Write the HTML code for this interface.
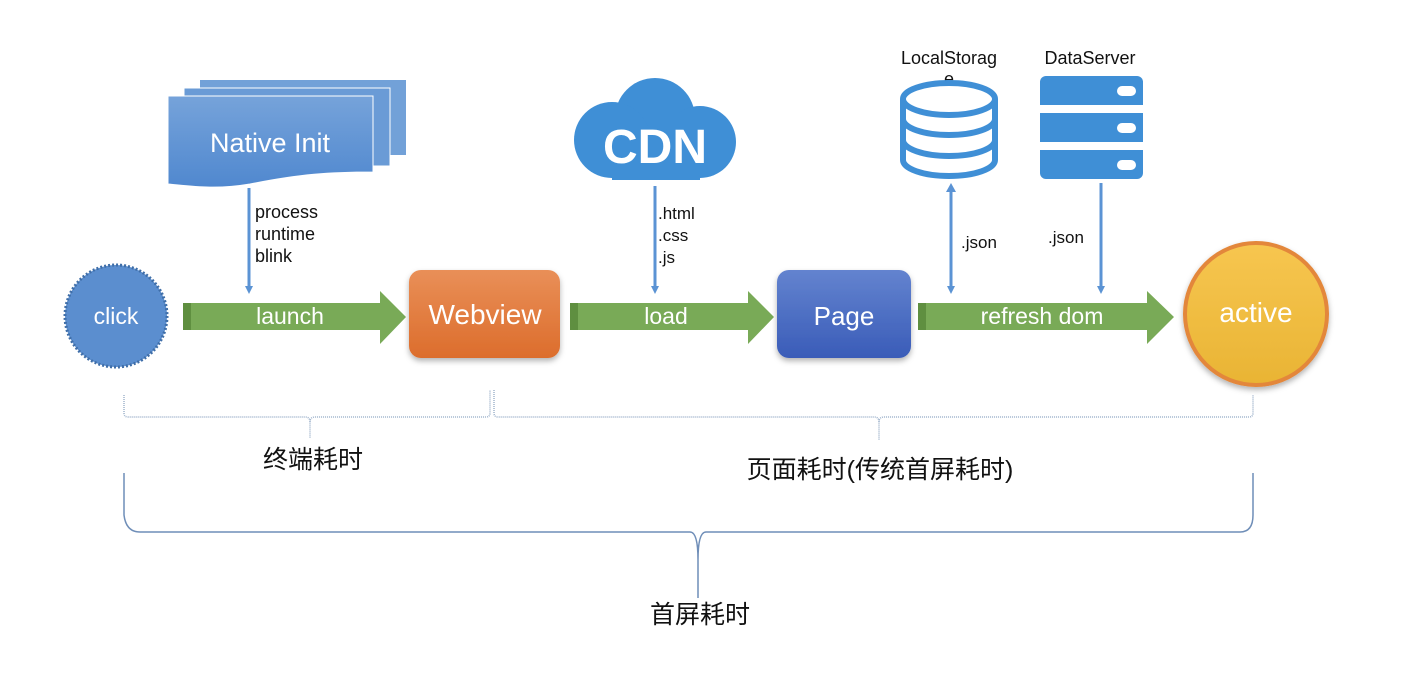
<!DOCTYPE html>
<html><head><meta charset="utf-8"><style>
html,body{margin:0;padding:0;background:#fff;}
svg{display:block}
text{font-family:"Liberation Sans","Noto Sans CJK SC",sans-serif;}
</style></head><body>
<svg width="1414" height="680" viewBox="0 0 1414 680" xmlns="http://www.w3.org/2000/svg">
<defs>
<linearGradient id="nb" x1="0" y1="0" x2="0" y2="1"><stop offset="0" stop-color="#76a3da"/><stop offset="1" stop-color="#5088cf"/></linearGradient>
<linearGradient id="ob" x1="0" y1="0" x2="0" y2="1"><stop offset="0" stop-color="#e98f58"/><stop offset="1" stop-color="#dc6d2c"/></linearGradient>
<linearGradient id="pb" x1="0" y1="0" x2="0" y2="1"><stop offset="0" stop-color="#6383cf"/><stop offset="1" stop-color="#3a5cb8"/></linearGradient>
<linearGradient id="yb" x1="0" y1="0" x2="0" y2="1"><stop offset="0" stop-color="#f7c650"/><stop offset="1" stop-color="#e9b434"/></linearGradient>
<filter id="sh" x="-20%" y="-20%" width="140%" height="150%"><feDropShadow dx="0" dy="3" stdDeviation="3" flood-color="#000" flood-opacity="0.3"/></filter>
<marker id="ah" markerWidth="8" markerHeight="8" refX="4" refY="4" orient="auto" markerUnits="userSpaceOnUse"><path d="M0,0 L8,4 L0,8z" fill="#5b93d4"/></marker>
</defs>

<!-- Native Init -->
<rect x="200" y="80" width="206" height="75" fill="#72a1d8"/>
<rect x="184" y="88" width="206" height="78" fill="#6a9bd6" stroke="#fff" stroke-width="1"/>
<path d="M168,96 H373 V172 C330,172 300,174 250,184 C215,190 190,186 168,184 Z" fill="url(#nb)" stroke="#fff" stroke-width="1"/>
<text x="270" y="152" font-size="27" fill="#fff" text-anchor="middle">Native Init</text>
<line x1="249" y1="188" x2="249" y2="290" stroke="#5b93d4" stroke-width="3" marker-end="url(#ah)"/>
<text font-size="18" fill="#111"><tspan x="255" y="218">process</tspan><tspan x="255" y="240">runtime</tspan><tspan x="255" y="262">blink</tspan></text>

<!-- click -->
<circle cx="116" cy="316" r="51" fill="#5b8ecf" stroke="#3f6ea8" stroke-width="3" stroke-dasharray="2 2"/>
<text x="116" y="324" font-size="23" fill="#fff" text-anchor="middle">click</text>

<!-- arrows -->
<path d="M183,303 H380 V291 L406,317 L380,344 V330 H183 Z" fill="#79aa57"/>
<rect x="183" y="303" width="8" height="27" fill="#5f8f40"/>
<text x="290" y="324" font-size="23" fill="#fff" text-anchor="middle">launch</text>

<path d="M570,303 H748 V291 L774,317 L748,344 V330 H570 Z" fill="#79aa57"/>
<rect x="570" y="303" width="8" height="27" fill="#5f8f40"/>
<text x="666" y="324" font-size="23" fill="#fff" text-anchor="middle">load</text>

<path d="M918,303 H1147 V291 L1174,317 L1147,344 V330 H918 Z" fill="#79aa57"/>
<rect x="918" y="303" width="8" height="27" fill="#5f8f40"/>
<text x="1042" y="324" font-size="23" fill="#fff" text-anchor="middle">refresh dom</text>

<!-- Webview -->
<rect x="409" y="270" width="151" height="88" rx="12" fill="url(#ob)" filter="url(#sh)"/>
<text x="485" y="324" font-size="28" fill="#fff" text-anchor="middle">Webview</text>

<!-- Page -->
<rect x="777" y="270" width="134" height="88" rx="12" fill="url(#pb)" filter="url(#sh)"/>
<text x="844" y="325" font-size="26" fill="#fff" text-anchor="middle">Page</text>

<!-- active -->
<circle cx="1256" cy="314" r="71" fill="url(#yb)" stroke="#e3873a" stroke-width="4" filter="url(#sh)"/>
<text x="1256" y="322" font-size="28" fill="#fff" text-anchor="middle">active</text>

<!-- CDN cloud -->
<g fill="#3f8fd6">
<circle cx="655" cy="118" r="40"/>
<circle cx="612" cy="140" r="38"/>
<circle cx="700" cy="142" r="36"/>
<rect x="612" y="130" width="88" height="50"/>
</g>
<text x="655" y="163" font-size="48" font-weight="bold" fill="#fff" text-anchor="middle">CDN</text>
<line x1="655" y1="186" x2="655" y2="290" stroke="#5b93d4" stroke-width="3" marker-end="url(#ah)"/>
<text font-size="17" fill="#111"><tspan x="658" y="219">.html</tspan><tspan x="658" y="241">.css</tspan><tspan x="658" y="263">.js</tspan></text>

<!-- LocalStorage -->
<text x="949" y="64" font-size="18" fill="#111" text-anchor="middle">LocalStorag</text>
<text x="949" y="85" font-size="18" fill="#111" text-anchor="middle">e</text>
<g fill="none" stroke="#3f8fd6" stroke-width="6">
<ellipse cx="949" cy="99" rx="46" ry="16"/>
<path d="M903,99 V160 A46,16 0 0 0 995,160 V99"/>
<path d="M903,119 A46,16 0 0 0 995,119"/>
<path d="M903,140 A46,16 0 0 0 995,140"/>
</g>
<line x1="951" y1="192" x2="951" y2="290" stroke="#5b93d4" stroke-width="3" marker-end="url(#ah)"/>
<path d="M946,192 L951,183 L956,192z" fill="#5b93d4"/>
<text x="961" y="248" font-size="17" fill="#111">.json</text>

<!-- DataServer -->
<text x="1090" y="64" font-size="18" fill="#111" text-anchor="middle">DataServer</text>
<g fill="#3f8fd6">
<path d="M1046,76 H1137 A6,6 0 0 1 1143,82 V105 H1040 V82 A6,6 0 0 1 1046,76z"/>
<rect x="1040" y="113" width="103" height="29"/>
<path d="M1040,150 H1143 V173 A6,6 0 0 1 1137,179 H1046 A6,6 0 0 1 1040,173z"/>
</g>
<g fill="#fff">
<rect x="1117" y="86" width="19" height="10" rx="5"/>
<rect x="1117" y="123" width="19" height="10" rx="5"/>
<rect x="1117" y="160" width="19" height="10" rx="5"/>
</g>
<line x1="1101" y1="183" x2="1101" y2="290" stroke="#5b93d4" stroke-width="3" marker-end="url(#ah)"/>
<text x="1048" y="243" font-size="17" fill="#111">.json</text>

<!-- braces -->
<g fill="none" stroke="#9fb3cc" stroke-width="1.5" stroke-dasharray="1 1">
<path d="M124,395 V413 Q124,417 128,417 H305 Q310,417 310,422 V438 M310,422 Q310,417 315,417 H486 Q490,417 490,413 V390"/>
<path d="M494,390 V413 Q494,417 498,417 H874 Q879,417 879,422 V440 M879,422 Q879,417 884,417 H1249 Q1253,417 1253,413 V395"/>
</g>
<path d="M124,473 V515 Q126,532 140,532 H690 Q698,532 698,560 V598 M698,560 Q698,532 706,532 H1240 Q1253,532 1253,515 V473" fill="none" stroke="#6f8eb8" stroke-width="1.5"/>
<text x="313" y="468" font-size="25" fill="#111" text-anchor="middle">终端耗时</text>
<text x="880" y="478" font-size="25" fill="#111" text-anchor="middle">页面耗时(传统首屏耗时)</text>
<text x="700" y="623" font-size="25" fill="#111" text-anchor="middle">首屏耗时</text>
</svg>
</body></html>
